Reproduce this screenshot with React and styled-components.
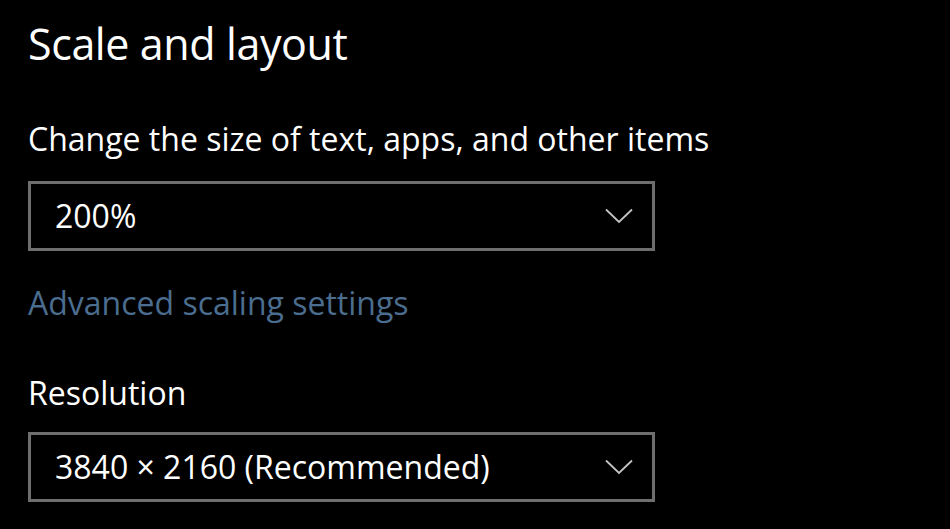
import React from "react";
import styled, { createGlobalStyle } from "styled-components";

const Global = createGlobalStyle`
  html, body { margin: 0; padding: 0; background: #000; }
  body { font-family: "Open Sans", "Noto Sans", sans-serif; color: #fff; }
`;

const Page = styled.div`
  display: flex;
  flex-direction: column;
  align-items: flex-start;
  padding: 16px 0 0 28px;
  width: 950px;
  height: 529px;
  box-sizing: border-box;
  overflow: hidden;
`;

const Title = styled.h1`
  margin: 0;
  font-size: 43px;
  line-height: 56px;
  font-weight: 400;
  letter-spacing: -0.4px;
`;

const Label = styled.div`
  margin-top: ${(p) => p.$top}px;
  font-size: 32px;
  line-height: 40px;
  color: #fff;
`;

const Link = styled.a`
  margin-top: ${(p) => p.$top}px;
  font-size: 32px;
  line-height: 40px;
  color: #4b6d8f;
  text-decoration: none;
`;

const Select = styled.div`
  margin-top: ${(p) => p.$top}px;
  width: 627px;
  height: 70px;
  box-sizing: border-box;
  border: 3px solid #6e6e6e;
  display: flex;
  align-items: center;
  justify-content: space-between;
  padding: 0 19px 0 24px;
`;

const SelectText = styled.span`
  font-size: 32px;
  line-height: 64px;
`;

const Chevron = () => (
  <svg width="28" height="16" viewBox="0 0 28 16" fill="none">
    <polyline points="1,1.5 14,14 27,1.5" stroke="#c4c4c4" strokeWidth="1.8" />
  </svg>
);

export default function App() {
  return (
    <>
      <Global />
      <Page>
        <Title>Scale and layout</Title>
        <Label $top={47}>Change the size of text, apps, and other items</Label>
        <Select $top={22}>
          <SelectText>200%</SelectText>
          <Chevron />
        </Select>
        <Link $top={32} href="#">Advanced scaling settings</Link>
        <Label $top={50}>Resolution</Label>
        <Select $top={19}>
          <SelectText>3840 × 2160 (Recommended)</SelectText>
          <Chevron />
        </Select>
      </Page>
    </>
  );
}
